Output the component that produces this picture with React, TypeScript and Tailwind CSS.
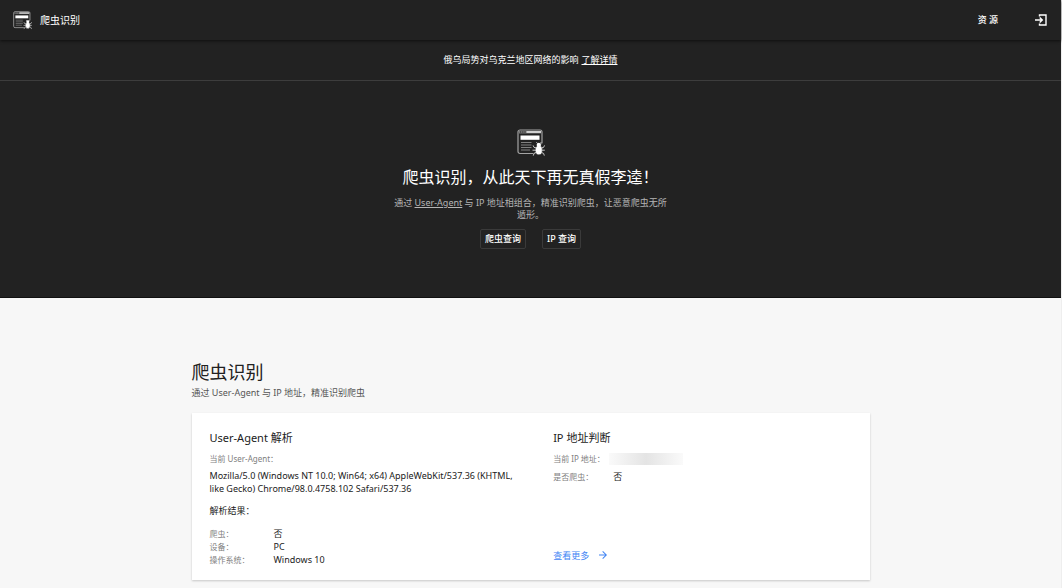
import React from "react";
import { MdArrowForward } from "react-icons/md";

function CrawlerLogo({ className }: { className: string }) {
  return (
    <svg viewBox="0 0 28 28" fill="none" className={className} aria-hidden="true">
      <rect x="1" y="1" width="24" height="23.5" rx="2" stroke="#a3a3a3" strokeWidth="1.2" />
      <path d="M2 3.2h22" stroke="#777" strokeWidth="2.6" />
      <path d="M3 3h1.2M5.2 3h1.2M7.4 3h1.2" stroke="#222" strokeWidth="1" />
      <path d="M9.5 3h14.5" stroke="#d0d0d0" strokeWidth="2" />
      <rect x="3.5" y="6.5" width="19" height="4.3" fill="#fff" />
      <path d="M4 13.5h10.5M4 16h10.5M4 18.5h10.5M4 21h9" stroke="#808080" strokeWidth="1" />
      <path
        d="M16 15l2.6 2.8M27.5 14.5l-3.4 3.3M15.5 21h12M16.5 26.5l3-3.2M27 26.5l-3-3.2"
        stroke="#222"
        strokeWidth="3"
      />
      <ellipse cx="21.8" cy="21.2" rx="3.5" ry="4.6" fill="#fff" stroke="#222" strokeWidth=".5" />
      <circle cx="21.8" cy="15.9" r="2.2" fill="#fff" />
      <path
        d="M20.6 14.6l-1.2-1.4M23 14.6l1.2-1.4M19.3 19l-2.3-.6-.9-2M24.3 19l2.3-.6.9-2M19 21.2h-3.5M24.6 21.2h3.2M19.3 23.4l-2.3 1-.7 2.2M24.3 23.4l2.3 1 .7 2.2"
        stroke="#d8d8d8"
        strokeWidth=".9"
      />
    </svg>
  );
}

const results = [
  ["爬虫：", "否"],
  ["设备：", "PC"],
  ["操作系统：", "Windows 10"],
];

export default function App() {
  return (
    <div className="min-h-screen border-r border-[#eeeeee] bg-[#f7f7f7] font-['Noto_Sans','Noto_Sans_CJK_SC',sans-serif] text-[9px] text-[#212121]">
      <header className="relative flex h-10 items-center justify-between bg-[#222222] px-[13px] text-white shadow-[0_1px_3px_rgba(0,0,0,0.6)]">
        <a href="#home" className="flex items-center gap-2 text-[10px]">
          <CrawlerLogo className="size-[19px]" />
          爬虫识别
        </a>
        <nav className="flex items-center gap-9">
          <a href="#resources" className="font-medium">资 源</a>
          <button type="button" aria-label="登录" className="flex">
            <svg viewBox="0 0 14 14" fill="none" stroke="currentColor" strokeWidth="1.4" className="size-[14px]" aria-hidden="true">
              <path d="M5.5 3.4V2h6.5v10H5.5v-1.4M1 7h7.3M5.7 4.4L8.3 7 5.7 9.6" />
            </svg>
          </button>
        </nav>
      </header>

      <div className="flex h-[41px] items-center justify-center gap-[3px] border-b border-[#3d3d3d] bg-[#222222] text-white">
        <span>俄乌局势对乌克兰地区网络的影响</span>
        <a href="#notice" className="underline">了解详情</a>
      </div>

      <section className="flex flex-col items-center border-b border-[#111111] bg-[#222222] pt-12 pb-12 text-center text-white">
        <CrawlerLogo className="size-7" />
        <h1 className="mt-2 text-[16px] leading-6">爬虫识别，从此天下再无真假李逵！</h1>
        <p className="mt-2 max-w-[280px] leading-3 text-[#b5b5b5]">
          通过 <a href="#ua" className="underline">User-Agent</a> 与 IP 地址相组合，精准识别爬虫，让恶意爬虫无所遁形。
        </p>
        <div className="mt-2 flex gap-4">
          <button type="button" className="h-5 rounded-xs border border-[#3a3a3a] px-1 font-medium">爬虫查询</button>
          <button type="button" className="h-5 rounded-xs border border-[#3a3a3a] px-1 font-medium">IP 查询</button>
        </div>
      </section>

      <main className="mx-auto max-w-[678px] pt-[60px] pb-2">
        <h2 className="text-[18px] leading-7">爬虫识别</h2>
        <p className="leading-[14px] text-[#555555]">通过 User-Agent 与 IP 地址，精准识别爬虫</p>

        <div className="mt-[13px] grid grid-cols-[15fr_14fr] gap-6 bg-white px-[18px] pt-4 pb-[14px] shadow-[0_1px_2px_rgba(0,0,0,0.2)]">
          <section>
            <h3 className="text-[11px] leading-[18px]">User-Agent 解析</h3>
            <p className="mt-1 text-[8px] leading-4 text-[#808080]">当前 User-Agent：</p>
            <p className="mt-[2px] leading-[13px]">
              Mozilla/5.0 (Windows NT 10.0; Win64; x64) AppleWebKit/537.36 (KHTML, like Gecko) Chrome/98.0.4758.102 Safari/537.36
            </p>
            <p className="mt-2 leading-4">解析结果：</p>
            <dl className="mt-2">
              {results.map(([label, value]) => (
                <div key={label} className="flex leading-[13px]">
                  <dt className="w-16 text-[8px] text-[#808080]">{label}</dt>
                  <dd>{value}</dd>
                </div>
              ))}
            </dl>
          </section>

          <section className="flex flex-col">
            <h3 className="text-[11px] leading-[18px]">IP 地址判断</h3>
            <dl className="mt-1">
              <div className="flex h-4 items-center">
                <dt className="w-14 text-[8px] text-[#808080]">当前 IP 地址：</dt>
                <dd className="h-3 w-[74px] bg-linear-to-r from-[#fafafa] via-[#e4e4e4] to-[#fafafa]" />
              </div>
              <div className="mt-[2px] flex h-4 items-center">
                <dt className="w-[60px] text-[8px] text-[#808080]">是否爬虫：</dt>
                <dd>否</dd>
              </div>
            </dl>
            <a href="#more" className="mt-auto mb-1 flex items-center gap-2 text-[#4285f4]">
              查看更多
              <MdArrowForward className="size-3" aria-hidden="true" />
            </a>
          </section>
        </div>
      </main>
    </div>
  );
}
